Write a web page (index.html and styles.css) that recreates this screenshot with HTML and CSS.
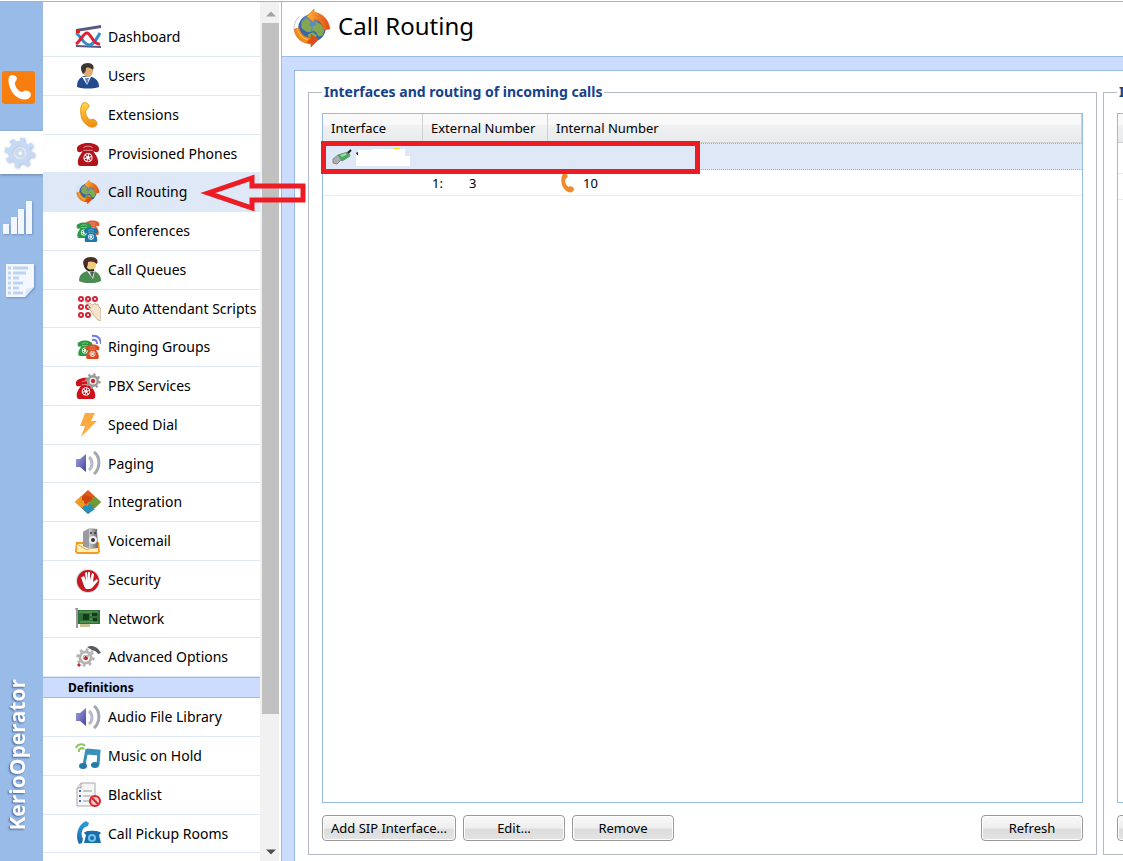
FILE: index.html
```html
<!DOCTYPE html>
<html lang="en">
<head>
  <meta charset="UTF-8">
  <meta name="viewport" content="width=device-width, initial-scale=1.0">
  <title>Kerio Operator - Call Routing</title>
  <link rel="stylesheet" href="styles.css">
</head>
<body>
  <!-- shared icons -->
  <svg class="sprite" width="0" height="0" aria-hidden="true">
    <defs>
      <linearGradient id="gold" x1="0" y1="0" x2="0" y2="1"><stop offset="0" stop-color="#ffd84a"/><stop offset="1" stop-color="#f08a10"/></linearGradient>
      <linearGradient id="flame" x1="0" y1="0" x2="1" y2="0"><stop offset="0" stop-color="#ffb52e"/><stop offset="1" stop-color="#e04818"/></linearGradient>
      <linearGradient id="violet" x1="0" y1="0" x2="1" y2="1"><stop offset="0" stop-color="#a5a3e0"/><stop offset="1" stop-color="#46469c"/></linearGradient>
      <linearGradient id="water" x1="0" y1="0" x2="0" y2="1"><stop offset="0" stop-color="#2f9fdd"/><stop offset="1" stop-color="#1668a8"/></linearGradient>
      <linearGradient id="steel" x1="0" y1="0" x2="1" y2="0"><stop offset="0" stop-color="#777"/><stop offset=".4" stop-color="#ccc"/><stop offset="1" stop-color="#666"/></linearGradient>
    </defs>
    <symbol id="handset" viewBox="0 0 26 26">
      <path d="M8 1c3-1 5 0 6 3 0 2-2 3-3 4-1 4 1 8 4 10 2-1 4-1 6 1 2 2 1 5-2 6-4 1-9-2-12-8C5 11 5 4 8 1z"/>
    </symbol>
    <symbol id="phone" viewBox="0 0 26 26">
      <path d="M1 7c0-3 5-6 12-6s12 3 12 6c0 3-1 4-3 4s-2-1-3-1c1 3 5 6 5 12 0 3-1 4-3 4H5c-2 0-3-1-3-4 0-6 4-9 5-12-1 0-1 1-3 1S1 10 1 7z"/>
      <path d="M8 6c3-2 7-2 10 0M8 9h10" fill="none" stroke="#fff" stroke-opacity=".6"/>
      <circle cx="13" cy="17" r="5" fill="#fff"/>
      <circle cx="13" cy="17" r="3" fill="none" stroke="currentColor" stroke-width="2" stroke-dasharray="2 1"/>
    </symbol>
    <symbol id="globe" viewBox="0 0 36 36">
      <circle cx="18" cy="18" r="13" fill="#3765ae"/>
      <circle cx="16" cy="14" r="8" fill="#7fabe2" opacity=".5"/>
      <path d="M8 12l5-3 4 3-2 3 3 2-2 5-4-1-4-3zM21 12l5 2 4 5-2 6-4 1-2-4-4-2 1-4 3-1zM14 24l5-2 4 3-4 4-4-1z" fill="#84a850"/>
      <path d="M13 7l7-7v3c7 1 14 6 15 16l-6 1c-1-7-5-10-9-10v3z" fill="url(#flame)" stroke="#d9660e" stroke-width=".5"/>
      <path d="M1 19l5-1c2 7 6 9 11 9v-3l7 5-7 7v-3C9 33 2 28 1 19z" fill="#f08a20" stroke="#d05a12" stroke-width=".5"/>
      <path d="M17 24l7 5-7 7v-3l-4-1 4-5z" fill="#dd4e1a"/>
      <path d="M4 19c2 6 5 9 10 10" fill="none" stroke="#ffc65a" stroke-width="1"/>
      <path d="M1 18c0-4 2-8 5-11" fill="none" stroke="#c9d0d8" stroke-width="1"/>
    </symbol>
    <symbol id="speaker" viewBox="0 0 26 26">
      <path d="M1 9h4l6-5v18l-6-5H1z" fill="url(#violet)"/>
      <path d="M14 7c4 3 4 10 0 13" fill="none" stroke="#b7bcc6" stroke-width="3"/>
      <path d="M19 2c7 5 6 17 0 22" fill="none" stroke="#a3a9b3" stroke-width="3"/>
    </symbol>
    <symbol id="gear" viewBox="0 0 34 34">
      <g fill="none" stroke="currentColor">
        <circle cx="17" cy="17" r="14" stroke-width="5" stroke-dasharray="5 6"/>
        <circle cx="17" cy="17" r="10" stroke-width="5"/>
        <circle cx="17" cy="17" r="4" stroke-width="2"/>
      </g>
    </symbol>
  </svg>

  <div class="app">
    <nav class="rail" aria-label="Sections">
      <a href="#status" class="rail-logo" aria-label="Kerio Operator">
        <svg width="29" height="29" viewBox="0 0 26 26" fill="#fff"><g transform="rotate(-16 13 13)"><use href="#handset"/></g></svg>
      </a>
      <a href="#configuration" class="rail-tab" aria-label="Configuration">
        <svg width="31" height="31" color="#c6d9f5"><use href="#gear"/></svg>
      </a>
      <a href="#statistics" class="rail-link" aria-label="Statistics">
        <svg width="32" height="36" viewBox="0 0 32 36" fill="#f2f7fe"><path d="M0 24h6v10H0zM8 17h6v17H8zM15 9h6v25h-6zM23 1h6v33h-6z"/></svg>
      </a>
      <a href="#logs" class="rail-link" aria-label="Logs">
        <svg width="32" height="38" viewBox="0 0 32 38">
          <path d="M3 2h28v23l-9 10H3z" fill="#f4f8fe"/>
          <path d="M31 25l-8 2-1 8z" fill="#dce7f7"/>
          <path d="M5 6h3M10 6h15M5 11h3M10 11h13M5 16h3M10 16h6M5 21h3M10 21h10M5 26h3M10 26h6M5 31h3M10 31h10" stroke="#bcd3f2" stroke-width="3"/>
        </svg>
      </a>
      <div class="rail-brand">KerioOperator</div>
    </nav>

    <aside class="sidebar">
      <div class="menu">
        <ul class="nav">
          <li><a href="#dashboard">
            <svg viewBox="0 0 26 26"><path d="M1 5l25-4v3L1 8z" fill="#565a82"/><path d="M1 21l25 1v2L1 23z" fill="#565a82"/><path d="M1 9c5 3 7 11 13 12 5 0 8-7 11-12" fill="none" stroke="#2f8ed0" stroke-width="3"/><path d="M1 20C6 17 8 9 12 9s6 12 13 11" fill="none" stroke="#dc2038" stroke-width="3"/><path d="M1 5h4v4H1z" fill="#e02018"/></svg>
            Dashboard</a></li>
          <li><a href="#users">
            <svg viewBox="0 0 26 26"><path d="M2 24c0-6 2-9 7-11l8 1c5 2 7 5 7 10-6 2-16 2-22 0z" fill="#234a8c"/><path d="M7 14l5 8 4-8z" fill="#f5f8ff"/><path d="M10 15l2 7 2-7z" fill="#5c86c8"/><ellipse cx="13" cy="8" rx="5" ry="6" fill="#e0ae70"/><path d="M7 9C4 3 8 0 13 0c4 0 7 3 5 7-2-2-5-3-7-2 0 3-1 5-3 6z" fill="#3a3432"/></svg>
            Users</a></li>
          <li><a href="#extensions">
            <svg viewBox="0 0 26 26" fill="url(#gold)" stroke="#e08a14" stroke-width=".8"><use href="#handset"/></svg>
            Extensions</a></li>
          <li><a href="#provisioned">
            <svg viewBox="0 0 26 26" fill="#b3141c" color="#b3141c"><use href="#phone" x="1" y="2" width="24" height="24"/></svg>
            Provisioned Phones</a></li>
          <li><a href="#routing" class="active">
            <svg viewBox="0 0 26 26"><use href="#globe" x="1" y="1" width="24" height="24"/></svg>
            Call Routing</a>
            <svg class="arrow" width="106" height="40" viewBox="0 0 106 40"><path d="M8 20L52 5v8h51v14H52v8z" fill="none" stroke="#ed1c24" stroke-width="5"/></svg>
          </li>
          <li><a href="#conferences">
            <svg viewBox="0 0 26 26"><g fill="#e05a30" color="#e05a30"><use href="#phone" x="10" y="2" width="15" height="15"/></g><g fill="#2b9a48" color="#2b9a48"><use href="#phone" x="1" y="4" width="16" height="16"/></g><g fill="#1b78a8" color="#1b78a8"><use href="#phone" x="8" y="9" width="16" height="15"/></g></svg>
            Conferences</a></li>
          <li><a href="#queues">
            <svg viewBox="0 0 26 26"><path d="M4 24c0-6 3-8 8-10h7c5 2 7 5 7 10-6 3-16 3-22 0z" fill="#4c8c54"/><path d="M12 14l6 8 2-9z" fill="#eef3ee"/><path d="M15 15l2 6 2-6z" fill="#555"/><ellipse cx="16" cy="8" rx="5" ry="6" fill="#efca7c"/><path d="M9 9C6 3 11 0 16 0c5 0 8 3 6 7-3-3-7-3-9-2 0 4-1 6-3 6z" fill="#4b2d27"/><path d="M10 9c2 5 6 5 9 4" fill="none" stroke="#222" stroke-width="2"/></svg>
            Call Queues</a></li>
          <li><a href="#scripts">
            <svg viewBox="0 0 26 26"><g fill="none" stroke="#cf2638" stroke-width="2"><circle cx="6" cy="4" r="2"/><circle cx="13" cy="4" r="2"/><circle cx="20" cy="4" r="2"/><circle cx="6" cy="12" r="2"/><circle cx="13" cy="12" r="2"/><circle cx="6" cy="20" r="2"/><circle cx="13" cy="20" r="2"/></g><path d="M10 6l8 4 2-2 1 2 2-1 1 3 2 2v12c-3 0-8-5-9-9l-4-4h3z" fill="#f3e3cc" stroke="#b99f80" stroke-width=".7"/></svg>
            Auto Attendant Scripts</a></li>
          <li><a href="#ringing">
            <svg viewBox="0 0 26 26"><g fill="#2b9a3c" color="#2b9a3c"><use href="#phone" x="2" y="6" width="16" height="16"/></g><g fill="#dd4a22" color="#dd4a22"><use href="#phone" x="10" y="10" width="15" height="15"/></g><path d="M17 2c6-1 9 3 9 8M17 6c4-1 5 1 5 4" fill="none" stroke="#7378dd" stroke-width="2"/></svg>
            Ringing Groups</a></li>
          <li><a href="#pbx">
            <svg viewBox="0 0 26 26"><g fill="#cf1018" color="#cf1018"><use href="#phone" x="0" y="4" width="22" height="22"/></g><circle cx="18" cy="8" r="6" fill="#eee"/><g color="#999"><use href="#gear" x="10" y="0" width="16" height="16"/></g><circle cx="18" cy="8" r="2" fill="#c22"/></svg>
            PBX Services</a></li>
          <li><a href="#speed">
            <svg viewBox="0 0 26 26"><path d="M10 1h10l-4 8h6L6 25l4-11H5z" fill="#fbab40"/></svg>
            Speed Dial</a></li>
          <li><a href="#paging">
            <svg viewBox="0 0 26 26"><use href="#speaker"/></svg>
            Paging</a></li>
          <li><a href="#integration">
            <svg viewBox="0 0 26 26"><path d="M13 1L0 13l13 12 13-12z" fill="#dd5a1c"/><path d="M0 13l6-6 3 3 3-1 2 4-1 4-6 2z" fill="#f09a24"/><path d="M26 13l-7-6-2 4-4 1 1 4 4 1 2 2z" fill="#6b9c38"/><path d="M13 25l-6-6 3-3 3 1 1-2 4 1-1 3 3 1z" fill="#1f93bd"/><path d="M7 8l3-2 3 1 4 1-1 4-3 1-1 3-3-2v-2l-2-1z" fill="#cf4412"/></svg>
            Integration</a></li>
          <li><a href="#voicemail">
            <svg viewBox="0 0 26 26"><path d="M1 14h23l1 10-2 2H2l-2-2z" fill="#f59a24"/><path d="M2 16h21v8H2z" fill="#fff0b8"/><path d="M2 16l10 6 11-6" fill="none" stroke="#eea04c"/><path d="M8 4l6-4 8 1 1 19-9 1-6-3z" fill="url(#steel)"/><path d="M8 4l6-3v19l-6-3z" fill="#999b9e"/><circle cx="18" cy="12" r="4" fill="#eee"/><circle cx="18" cy="12" r="2" fill="#333"/><circle cx="16" cy="5" r="1" fill="#333"/><circle cx="20" cy="5" r="1" fill="#333"/></svg>
            Voicemail</a></li>
          <li><a href="#security">
            <svg viewBox="0 0 26 26"><circle cx="13" cy="14" r="12" fill="#ddd"/><circle cx="13" cy="14" r="11" fill="#c51820"/><path d="M7 10l2-1 2 5-1-8 2-1 1 8V5h2v8l2-7 2 1-1 8 4-3 1 2-6 7-2 1h-4c-2-2-3-6-5-12z" fill="#fff"/></svg>
            Security</a></li>
          <li><a href="#network">
            <svg viewBox="0 0 26 26"><path d="M0 3h3v20H1V6z" fill="#999"/><path d="M3 5h22v14H3z" fill="#2f7038"/><path d="M5 19h10v3H5z" fill="#c9c398"/><path d="M8 9h6v6H8zM17 7h5v4h-5zM18 13h4v4h-4z" fill="#143a1e"/><path d="M4 7h19M5 17h18M15 10h2M15 14h2" stroke="#6fae5e"/></svg>
            Network</a></li>
          <li><a href="#advanced">
            <svg viewBox="0 0 26 26"><g color="#b4b4b4"><use href="#gear" x="1" y="4" width="19" height="19"/></g><circle cx="11" cy="14" r="2" fill="#b22"/><path d="M12 13l7-8" stroke="#bbb" stroke-width="2"/><path d="M3 22l2-2" stroke="#c4262c" stroke-width="3"/><path d="M12 3c5-2 10-1 14 6l-3 1c-2-3-4-4-6-4z" fill="#555a60"/></svg>
            Advanced Options</a></li>
        </ul>
        <h2 class="nav-heading">Definitions</h2>
        <ul class="nav">
          <li><a href="#audio">
            <svg viewBox="0 0 26 26"><use href="#speaker"/></svg>
            Audio File Library</a></li>
          <li><a href="#music">
            <svg viewBox="0 0 26 26"><path d="M12 7l12 1-1 14M12 6L9 22M12 10l11 1" fill="none" stroke="#3790b9" stroke-width="3"/><ellipse cx="8" cy="23" rx="4" ry="3" fill="#237ba8"/><ellipse cx="20" cy="22" rx="4" ry="3" fill="#237ba8"/><path d="M1 5c1-4 7-5 9-2M4 9c-1-3 3-5 5-3" fill="none" stroke="#8bc35c" stroke-width="2"/></svg>
            Music on Hold</a></li>
          <li><a href="#blacklist">
            <svg viewBox="0 0 26 26"><path d="M6 1h14v23H2V6z" fill="#f5f5f5" stroke="#aaa"/><path d="M6 1v5H2" fill="#ddd" stroke="#aaa"/><path d="M8 9h9M8 14h10M8 19h6" stroke="#999"/><path d="M4 9h2M4 14h2M4 19h2" stroke="#3a6ed0" stroke-width="2"/><circle cx="20" cy="19" r="5" fill="#f2c6c6" stroke="#d8232c" stroke-width="2"/><path d="M17 16l6 6" stroke="#d8232c" stroke-width="2"/></svg>
            Blacklist</a></li>
          <li><a href="#pickup">
            <svg viewBox="0 0 26 26"><path d="M11 1l3 2-1 3-3 1c-4 3-4 8-2 12l-1 4-3 1C0 17 2 5 11 1z" fill="url(#water)"/><path d="M9 13c1-3 15-3 17 0l-2 2 2 8H9l2-8z" fill="#1a6eaa"/><circle cx="17" cy="18" r="4" fill="#6fc4ee"/><circle cx="17" cy="18" r="2" fill="#1a6eaa"/></svg>
            Call Pickup Rooms</a></li>
        </ul>
      </div>
      <div class="scrollbar" aria-hidden="true">
        <svg class="scroll-arrow" viewBox="0 0 17 20"><path d="M4 14l5-5 5 5z" fill="#a3a3a3"/></svg>
        <div class="scroll-thumb"></div>
        <div class="scroll-rest"></div>
        <svg class="scroll-arrow" viewBox="0 0 17 20"><path d="M4 9h10l-5 5z" fill="#505050"/></svg>
      </div>
    </aside>

    <main class="main">
      <header class="title-bar">
        <svg width="38" height="38"><use href="#globe"/></svg>
        <h1>Call Routing</h1>
      </header>
      <div class="content">
        <fieldset class="group">
          <legend>Interfaces and routing of incoming calls</legend>
          <div class="grid">
            <table>
              <colgroup><col class="col-interface"><col class="col-external"><col></colgroup>
              <thead>
                <tr><th>Interface</th><th>External Number</th><th>Internal Number</th></tr>
              </thead>
              <tbody>
                <tr class="selected">
                  <td><div class="cell">
                    <svg width="20" height="16" viewBox="0 0 20 16"><path d="M1 10l5-4 4 4-5 5-4-1z" fill="#a9aeb0" stroke="#888"/><path d="M6 6l10-3 2 4-8 5z" fill="#4ca766" stroke="#5c9c70"/><path d="M9 7l5-2" stroke="#a5dcae" stroke-width="2"/><path d="M16 4l3-3" stroke="#222" stroke-width="2"/></svg>
                    <svg width="54" height="18" viewBox="0 0 54 18"><path d="M37 0h7l-2 2h-3z" fill="#ffd91c"/><path d="M0 5h2V2h15V1h32v7h5v10H0z" fill="#fff"/><path d="M0 5l2-1v3H1z" fill="#222"/></svg>
                  </div></td>
                  <td></td><td></td>
                </tr>
                <tr>
                  <td></td>
                  <td><div class="cell number"><span>1:</span><span>3</span></div></td>
                  <td><div class="cell"><svg width="20" height="20" fill="#ee8a2c"><use href="#handset"/></svg>10</div></td>
                </tr>
              </tbody>
            </table>
            <div class="highlight"></div>
          </div>
          <div class="toolbar">
            <button type="button" class="wide">Add SIP Interface...</button>
            <button type="button">Edit...</button>
            <button type="button">Remove</button>
            <button type="button" class="refresh">Refresh</button>
          </div>
        </fieldset>

        <fieldset class="group next">
          <legend>I</legend>
          <div class="grid">
            <table>
              <thead><tr><th></th></tr></thead>
              <tbody><tr class="first"><td></td></tr><tr><td></td></tr></tbody>
            </table>
          </div>
          <div class="toolbar"><button type="button" aria-label="Add"></button></div>
        </fieldset>
      </div>
    </main>
  </div>
</body>
</html>
```
FILE: styles.css
```css
* {
  margin: 0;
  padding: 0;
  box-sizing: border-box;
}

body {
  height: 100vh;
  padding-top: 1px;
  overflow: hidden;
  background: #fff;
  color: #000;
  font-family: "Noto Sans", sans-serif;
  font-size: 13px;
}

a {
  color: inherit;
  text-decoration: none;
}

.sprite {
  position: absolute;
}

.app {
  display: flex;
  height: 100%;
  border-top: 1px solid #b0b0b0;
}

/* left icon rail */
.rail {
  flex: none;
  display: flex;
  flex-direction: column;
  width: 43px;
  padding: 69px 0 30px;
  background: #99bbe8;
}

.rail-logo {
  display: flex;
  align-items: center;
  justify-content: center;
  width: 33px;
  height: 33px;
  margin: 0 0 27px 2px;
  border-radius: 3px;
  background: #f97e10;
}

.rail-tab {
  display: flex;
  align-items: center;
  height: 43px;
  padding-left: 4px;
  margin-bottom: 26px;
  background: #fff;
  box-shadow: 0 1px 3px rgba(0, 0, 0, 0.3);
}

.rail-link {
  display: flex;
  margin: 0 0 26px 3px;
}

.rail svg {
  filter: drop-shadow(1px 1px 1px rgba(60, 90, 140, 0.4));
}

.rail-logo svg {
  filter: none;
}

.rail-brand {
  margin: auto 0 0 2px;
  writing-mode: vertical-rl;
  transform: rotate(180deg);
  color: #fff;
  font-family: "Open Sans", sans-serif;
  font-size: 21px;
  font-weight: 700;
  line-height: 30px;
  text-shadow: -1px -1px 2px #46669a;
}

/* sidebar */
.sidebar {
  flex: none;
  position: relative;
  z-index: 1;
  display: flex;
  width: 239px;
  border-right: 1px solid #99bbe8;
  background: #fff;
}

.menu {
  width: 217px;
  padding-top: 16px;
}

.nav {
  list-style: none;
  font-size: 14px;
}

.nav li {
  position: relative;
  height: 39px;
}

.nav li:nth-child(4n) {
  height: 38px;
}

.nav a {
  display: flex;
  align-items: center;
  gap: 7px;
  height: 100%;
  padding: 0 0 1px 32px;
  border-bottom: 1px solid #dfe8f6;
  white-space: nowrap;
}

.nav a svg {
  flex: none;
  width: 26px;
  height: 26px;
}

.nav .active {
  background: #dfe8f6;
}

.arrow {
  position: absolute;
  z-index: 2;
  top: 0;
  left: 157px;
}

.nav-heading {
  height: 21px;
  padding-left: 25px;
  border: 1px solid #99bbe8;
  border-width: 1px 0;
  background: #ccdcfe;
  font-size: 12px;
  line-height: 19px;
}

.scrollbar {
  display: flex;
  flex-direction: column;
  width: 19px;
  padding-left: 2px;
  background: #f1f1f1;
}

.scroll-arrow {
  flex: none;
  width: 17px;
  height: 21px;
}

.scroll-thumb {
  flex: 11;
  background: #c1c1c1;
}

.scroll-rest {
  flex: 2;
}

/* main area */
.main {
  flex: 1;
  display: flex;
  flex-direction: column;
  min-width: 0;
  background: #ccdcfe;
}

.title-bar {
  display: flex;
  align-items: center;
  gap: 7px;
  height: 55px;
  padding: 0 0 3px 11px;
  border-bottom: 1px solid #99bbe8;
  background: #fff;
}

h1 {
  padding-bottom: 4px;
  font-size: 24px;
  font-weight: 400;
}

.content {
  flex: 1;
  display: flex;
  gap: 6px;
  min-height: 0;
  margin: 13px 0 0 12px;
  padding: 11px 0 6px 13px;
  border: 1px solid #99bbe8;
  border-width: 1px 0 0 1px;
  background: #fff;
}

.group {
  flex: 1;
  display: flex;
  flex-direction: column;
  min-width: 0;
  padding: 11px 13px 13px;
  border: 1px solid #b5b8c8;
}

.group.next {
  flex: 0 0 20px;
  padding-right: 0;
  border-right: 0;
  overflow: hidden;
}

legend {
  padding: 0 2px;
  color: #15428b;
  font-size: 14px;
  font-weight: 700;
  line-height: 20px;
}

.grid {
  position: relative;
  flex: 1;
  border: 1px solid #99bbe8;
}

.next .grid {
  border-right: 0;
}

table {
  width: 100%;
  table-layout: fixed;
  border-collapse: separate;
  border-spacing: 0;
}

.col-interface {
  width: 100px;
}

.col-external {
  width: 125px;
}

th {
  height: 29px;
  padding-left: 8px;
  border-right: 1px solid #d0d0d0;
  border-bottom: 1px solid #d0d0d0;
  background: linear-gradient(#f9f9f9 0 40%, #f0f1f2 40%, #e8eaeb);
  font-weight: 400;
  text-align: left;
  white-space: nowrap;
}

td {
  height: 26px;
  padding-left: 9px;
  border-bottom: 1px solid #ededed;
}

.first td {
  height: 31px;
}

.selected td {
  height: 27px;
  border: 1px dotted #99b0d8;
  border-width: 1px 0;
  background: #dfe8f6;
}

.next th {
  border-right: 0;
}

.cell {
  display: flex;
  align-items: center;
  gap: 6px;
}

.selected .cell {
  gap: 4px;
}

.number {
  gap: 26px;
}

.highlight {
  position: absolute;
  top: 27px;
  left: -2px;
  width: 379px;
  height: 33px;
  border: 5px solid #ed1c24;
}

.toolbar {
  display: flex;
  gap: 7px;
  margin-top: 12px;
}

button {
  flex: none;
  width: 102px;
  height: 26px;
  border: 1px solid #999;
  border-radius: 4px;
  background: linear-gradient(#f9f9f9, #eee 50%, #dcdcdc 55%, #e4e4e4);
  box-shadow: inset 0 0 0 1px #fff;
  color: inherit;
  font: inherit;
}

.wide {
  width: 134px;
}

.refresh {
  margin-left: auto;
}
```
